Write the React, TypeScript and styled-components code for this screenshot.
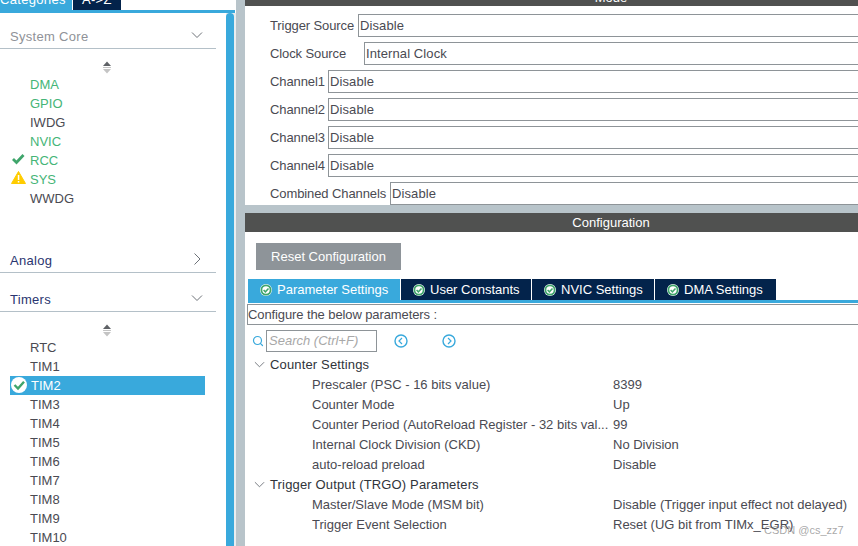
import React from "react";
import styled, { createGlobalStyle } from "styled-components";
import { Search } from "lucide-react";

const GlobalStyle = createGlobalStyle`
  html, body {
    margin: 0;
    padding: 0;
    background: #fff;
    overflow: hidden;
  }
  * {
    box-sizing: border-box;
  }
`;

const Page = styled.div`
  position: relative;
  display: flex;
  width: 858px;
  height: 546px;
  overflow: hidden;
  background: #fff;
  font-family: "Liberation Sans", Arial, sans-serif;
  font-size: 13px;
  color: #4a4a52;
`;

const Sidebar = styled.div`
  width: 236px;
  flex: none;
  display: flex;
  flex-direction: column;
`;

const TabStrip = styled.div`
  height: 10px;
  flex: none;
  display: flex;
  align-items: flex-end;
  gap: 1px;
  overflow: hidden;
`;

const SideTab = styled.div<{ $active?: boolean; $w: number; $pad: number }>`
  width: ${(p) => p.$w}px;
  height: 20px;
  flex: none;
  padding-left: ${(p) => p.$pad}px;
  line-height: 20px;
  color: #fff;
  letter-spacing: 0.3px;
  white-space: nowrap;
  overflow: hidden;
  background: ${(p) => (p.$active ? "#39a9dc" : "#03234b")};
`;

const BlueRule = styled.div`
  height: 3px;
  width: 235px;
  flex: none;
  background: #39a9dc;
`;

const SideBody = styled.div`
  flex: 1;
  display: flex;
  min-height: 0;
`;

const SideContent = styled.div`
  width: 226px;
  flex: none;
  padding-top: 13px;
`;

const ScrollTrack = styled.div`
  flex: 1;
  padding-right: 2px;
  background: #e9edef;
`;

const ScrollThumb = styled.div`
  height: 100%;
  border-radius: 4px 4px 0 0;
  background: #39a9dc;
`;

const SectionHead = styled.div<{ $muted?: boolean; $gap?: number }>`
  width: 216px;
  height: 23px;
  margin-top: ${(p) => p.$gap ?? 0}px;
  padding: 0 13px 2px 10px;
  display: flex;
  align-items: center;
  justify-content: space-between;
  border-bottom: 1px solid #b4c0c8;
  letter-spacing: 0.3px;
  color: ${(p) => (p.$muted ? "#8f9298" : "#2a3570")};
`;

const HeadIcon = styled.span`
  display: flex;
  margin-bottom: 3px;
`;

const SortHolder = styled.div`
  height: 26px;
  padding: 12px 0 0 102px;
`;

const ItemList = styled.div`
  display: flex;
  flex-direction: column;
`;

const Item = styled.div<{ $tone?: "green" | "plain"; $selected?: boolean }>`
  position: relative;
  width: 195px;
  height: 19px;
  margin-left: 10px;
  padding-left: ${(p) => (p.$selected ? 21 : 20)}px;
  line-height: 19px;
  background: ${(p) => (p.$selected ? "#39a9dc" : "transparent")};
  color: ${(p) =>
    p.$selected ? "#fff" : p.$tone === "green" ? "#45b577" : "#4a4a52"};
`;

const ItemBadge = styled.span`
  position: absolute;
  left: 1px;
  top: 1px;
  display: flex;
`;

const Divider = styled.div`
  width: 9px;
  flex: none;
  background: #b8c4ca;
`;

const Main = styled.div`
  flex: 1;
  min-width: 0;
  display: flex;
  flex-direction: column;
`;

const DarkBar = styled.div<{ $h: number; $pb: number }>`
  height: ${(p) => p.$h}px;
  flex: none;
  padding: 0 0 ${(p) => p.$pb}px 119px;
  display: flex;
  align-items: flex-end;
  justify-content: center;
  overflow: hidden;
  background: #505150;
  color: #fff;
  line-height: 17px;
`;

const ModeForm = styled.div`
  height: 199px;
  flex: none;
  padding: 8px 0 0 25px;
  display: flex;
  flex-direction: column;
  gap: 5px;
`;

const FormRow = styled.div`
  height: 23px;
  flex: none;
  display: flex;
  align-items: center;
`;

const FormLabel = styled.label<{ $w: number }>`
  width: ${(p) => p.$w}px;
  flex: none;
  white-space: nowrap;
  letter-spacing: -0.1px;
`;

const FormValue = styled.div`
  flex: 1;
  height: 23px;
  padding-left: 1px;
  line-height: 21px;
  border: 1px solid #8e9498;
  border-right: none;
  letter-spacing: 0.1px;
`;

const GrayBand = styled.div`
  height: 8px;
  flex: none;
  background: #b8c4ca;
`;

const Toolbar = styled.div`
  height: 47px;
  flex: none;
  padding: 11px 0 0 11px;
`;

const ResetButton = styled.button`
  display: block;
  width: 145px;
  height: 27px;
  padding: 0;
  border: none;
  background: #8e9499;
  color: #fff;
  font: inherit;
`;

const TabRow = styled.div`
  height: 21px;
  flex: none;
  margin-left: 3px;
  display: flex;
  gap: 1px;
`;

const ConfigTab = styled.div<{ $active?: boolean; $w: number }>`
  width: ${(p) => p.$w}px;
  flex: none;
  display: flex;
  align-items: center;
  gap: 5px;
  padding-left: 12px;
  color: #fff;
  white-space: nowrap;
  background: ${(p) => (p.$active ? "#39a9dc" : "#03234b")};
`;

const TabRule = styled.div`
  height: 3px;
  flex: none;
  margin-left: 3px;
  background: #39a9dc;
`;

const ConfigureBox = styled.div`
  height: 21px;
  flex: none;
  margin: 1px 0 0 2px;
  line-height: 19px;
  border: 1px solid #8e9498;
  border-right: none;
  color: #4a4a52;
  letter-spacing: -0.1px;
`;

const SearchRow = styled.div`
  height: 23px;
  flex: none;
  margin-top: 4px;
  padding-left: 7px;
  display: flex;
  align-items: center;
`;

const SearchBox = styled.div`
  width: 111px;
  height: 22px;
  margin-left: 2px;
  padding-left: 2px;
  line-height: 20px;
  border: 1px solid #8e9498;
  color: #a8a8a8;
  font-style: italic;
`;

const NavGroup = styled.div`
  margin-left: 17px;
  display: flex;
  gap: 34px;
`;

const Tree = styled.div`
  margin-top: 2px;
  display: flex;
  flex-direction: column;
`;

const GroupRow = styled.div`
  height: 20px;
  padding-left: 9px;
  display: flex;
  align-items: center;
  gap: 5px;
  color: #30343a;
  letter-spacing: 0.15px;
`;

const ParamRow = styled.div`
  height: 20px;
  padding-left: 67px;
  display: flex;
  align-items: center;
  white-space: nowrap;
`;

const ParamName = styled.span`
  width: 301px;
  flex: none;
  overflow: hidden;
`;

const Watermark = styled.div`
  position: absolute;
  left: 764px;
  top: 524px;
  color: rgba(130, 130, 130, 0.7);
  font-size: 11px;
`;

const Chevron = ({ dir = "down", size = 12, color = "#6d7278" }: { dir?: "down" | "right"; size?: number; color?: string }) => (
  <svg width={size} height={size} viewBox="0 0 12 12" fill="none" stroke={color} strokeWidth="1">
    {dir === "down" ? <path d="M1 3.5 L6 8.5 L11 3.5" /> : <path d="M3.5 0.5 L9 6 L3.5 11.5" />}
  </svg>
);

const SortArrows = () => (
  <svg width="10" height="13" viewBox="0 0 10 13" style={{ display: "block" }}>
    <path d="M5 0.5 L9 5 L1 5 Z" fill="#5f6266" />
    <rect x="1" y="6" width="8" height="1" fill="#c4c4c4" />
    <path d="M1 8 L9 8 L5 12.5 Z" fill="#c4c4c4" />
  </svg>
);

const TickIcon = () => (
  <svg width="14" height="13" viewBox="0 0 14 13">
    <path d="M2 7 L5.5 10.5 L12.5 3" fill="none" stroke="#3fa56b" strokeWidth="2.8" />
  </svg>
);

const WarnIcon = () => (
  <svg width="15" height="13" viewBox="0 0 15 13">
    <path d="M7.5 0.5 L14.5 12.5 L0.5 12.5 Z" fill="#ffcc00" stroke="#ffcc00" strokeLinejoin="round" />
    <rect x="6.8" y="4" width="1.5" height="5" fill="#fff" />
    <rect x="6.8" y="10" width="1.5" height="1.5" fill="#fff" />
  </svg>
);

const StatusIcon = ({ size = 12 }: { size?: number }) => (
  <svg width={size} height={size} viewBox="0 0 12 12" style={{ flex: "none" }}>
    <circle cx="6" cy="6" r="6" fill="#fff" />
    <circle cx="6" cy="6" r="4.6" fill="none" stroke="#3fa56b" strokeWidth="1.8" />
    <path d="M3.6 6 L5.4 7.8 L8.5 4.5" fill="none" stroke="#3fa56b" strokeWidth="1.5" />
  </svg>
);

const SelectedIcon = () => (
  <svg width="16" height="16" viewBox="0 0 16 16">
    <circle cx="8" cy="8" r="8" fill="#fff" />
    <path d="M3.5 8 L7 11.5 L13 4.8" fill="none" stroke="#3fa56b" strokeWidth="2.4" />
  </svg>
);

const RoundNav = ({ dir }: { dir: "left" | "right" }) => (
  <svg width="14" height="14" viewBox="0 0 14 14" fill="none" stroke="#39a9dc">
    <circle cx="7" cy="7" r="6" strokeWidth="1.4" />
    <path d={dir === "left" ? "M8 4 L5 7 L8 10" : "M6 4 L9 7 L6 10"} strokeWidth="1.2" />
  </svg>
);

const coreItems = [
  { name: "DMA", tone: "green" },
  { name: "GPIO", tone: "green" },
  { name: "IWDG", tone: "plain" },
  { name: "NVIC", tone: "green" },
  { name: "RCC", tone: "green", badge: "tick" },
  { name: "SYS", tone: "green", badge: "warn" },
  { name: "WWDG", tone: "plain" },
] as const;

const timerItems = ["RTC", "TIM1", "TIM2", "TIM3", "TIM4", "TIM5", "TIM6", "TIM7", "TIM8", "TIM9", "TIM10"];

const modeRows = [
  { label: "Trigger Source", width: 88, value: "Disable" },
  { label: "Clock Source", width: 94, value: "Internal Clock" },
  { label: "Channel1", width: 58, value: "Disable" },
  { label: "Channel2", width: 58, value: "Disable" },
  { label: "Channel3", width: 58, value: "Disable" },
  { label: "Channel4", width: 58, value: "Disable" },
  { label: "Combined Channels", width: 120, value: "Disable" },
];

const configTabs = [
  { label: "Parameter Settings", width: 152, active: true },
  { label: "User Constants", width: 130 },
  { label: "NVIC Settings", width: 122 },
  { label: "DMA Settings", width: 121 },
];

const counterParams = [
  ["Prescaler (PSC - 16 bits value)", "8399"],
  ["Counter Mode", "Up"],
  ["Counter Period (AutoReload Register - 32 bits val...", "99"],
  ["Internal Clock Division (CKD)", "No Division"],
  ["auto-reload preload", "Disable"],
];

const trgoParams = [
  ["Master/Slave Mode (MSM bit)", "Disable (Trigger input effect not delayed)"],
  ["Trigger Event Selection", "Reset (UG bit from TIMx_EGR)"],
];

export default function App() {
  return (
    <Page>
      <GlobalStyle />
      <Sidebar>
        <TabStrip>
          <SideTab $active $w={72} $pad={0}>Categories</SideTab>
          <SideTab $w={48} $pad={9}>A-&gt;Z</SideTab>
        </TabStrip>
        <BlueRule />
        <SideBody>
          <SideContent>
            <SectionHead $muted>
              System Core
              <HeadIcon>
                <Chevron />
              </HeadIcon>
            </SectionHead>
            <SortHolder>
              <SortArrows />
            </SortHolder>
            <ItemList>
              {coreItems.map((item) => (
                <Item key={item.name} $tone={item.tone}>
                  {"badge" in item && (
                    <ItemBadge>{item.badge === "tick" ? <TickIcon /> : <WarnIcon />}</ItemBadge>
                  )}
                  {item.name}
                </Item>
              ))}
            </ItemList>
            <SectionHead $gap={42}>
              Analog
              <HeadIcon>
                <Chevron dir="right" />
              </HeadIcon>
            </SectionHead>
            <SectionHead $gap={16}>
              Timers
              <HeadIcon>
                <Chevron />
              </HeadIcon>
            </SectionHead>
            <SortHolder>
              <SortArrows />
            </SortHolder>
            <ItemList>
              {timerItems.map((name) => (
                <Item key={name} $selected={name === "TIM2"}>
                  {name === "TIM2" && (
                    <ItemBadge>
                      <SelectedIcon />
                    </ItemBadge>
                  )}
                  {name}
                </Item>
              ))}
            </ItemList>
          </SideContent>
          <ScrollTrack>
            <ScrollThumb />
          </ScrollTrack>
        </SideBody>
      </Sidebar>
      <Divider />
      <Main>
        <DarkBar $h={6} $pb={0}>Mode</DarkBar>
        <ModeForm>
          {modeRows.map((row) => (
            <FormRow key={row.label}>
              <FormLabel $w={row.width}>{row.label}</FormLabel>
              <FormValue>{row.value}</FormValue>
            </FormRow>
          ))}
        </ModeForm>
        <GrayBand />
        <DarkBar $h={19} $pb={1}>Configuration</DarkBar>
        <Toolbar>
          <ResetButton>Reset Configuration</ResetButton>
        </Toolbar>
        <TabRow>
          {configTabs.map((tab) => (
            <ConfigTab key={tab.label} $active={tab.active} $w={tab.width}>
              <StatusIcon />
              {tab.label}
            </ConfigTab>
          ))}
        </TabRow>
        <TabRule />
        <ConfigureBox>Configure the below parameters :</ConfigureBox>
        <SearchRow>
          <Search size={12} color="#39a9dc" strokeWidth={2.4} />
          <SearchBox>Search (Ctrl+F)</SearchBox>
          <NavGroup>
            <RoundNav dir="left" />
            <RoundNav dir="right" />
          </NavGroup>
        </SearchRow>
        <Tree>
          <GroupRow>
            <Chevron size={11} />
            Counter Settings
          </GroupRow>
          {counterParams.map(([name, value]) => (
            <ParamRow key={name}>
              <ParamName>{name}</ParamName>
              {value}
            </ParamRow>
          ))}
          <GroupRow>
            <Chevron size={11} />
            Trigger Output (TRGO) Parameters
          </GroupRow>
          {trgoParams.map(([name, value]) => (
            <ParamRow key={name}>
              <ParamName>{name}</ParamName>
              {value}
            </ParamRow>
          ))}
        </Tree>
      </Main>
      <Watermark>CSDN @cs_zz7</Watermark>
    </Page>
  );
}
